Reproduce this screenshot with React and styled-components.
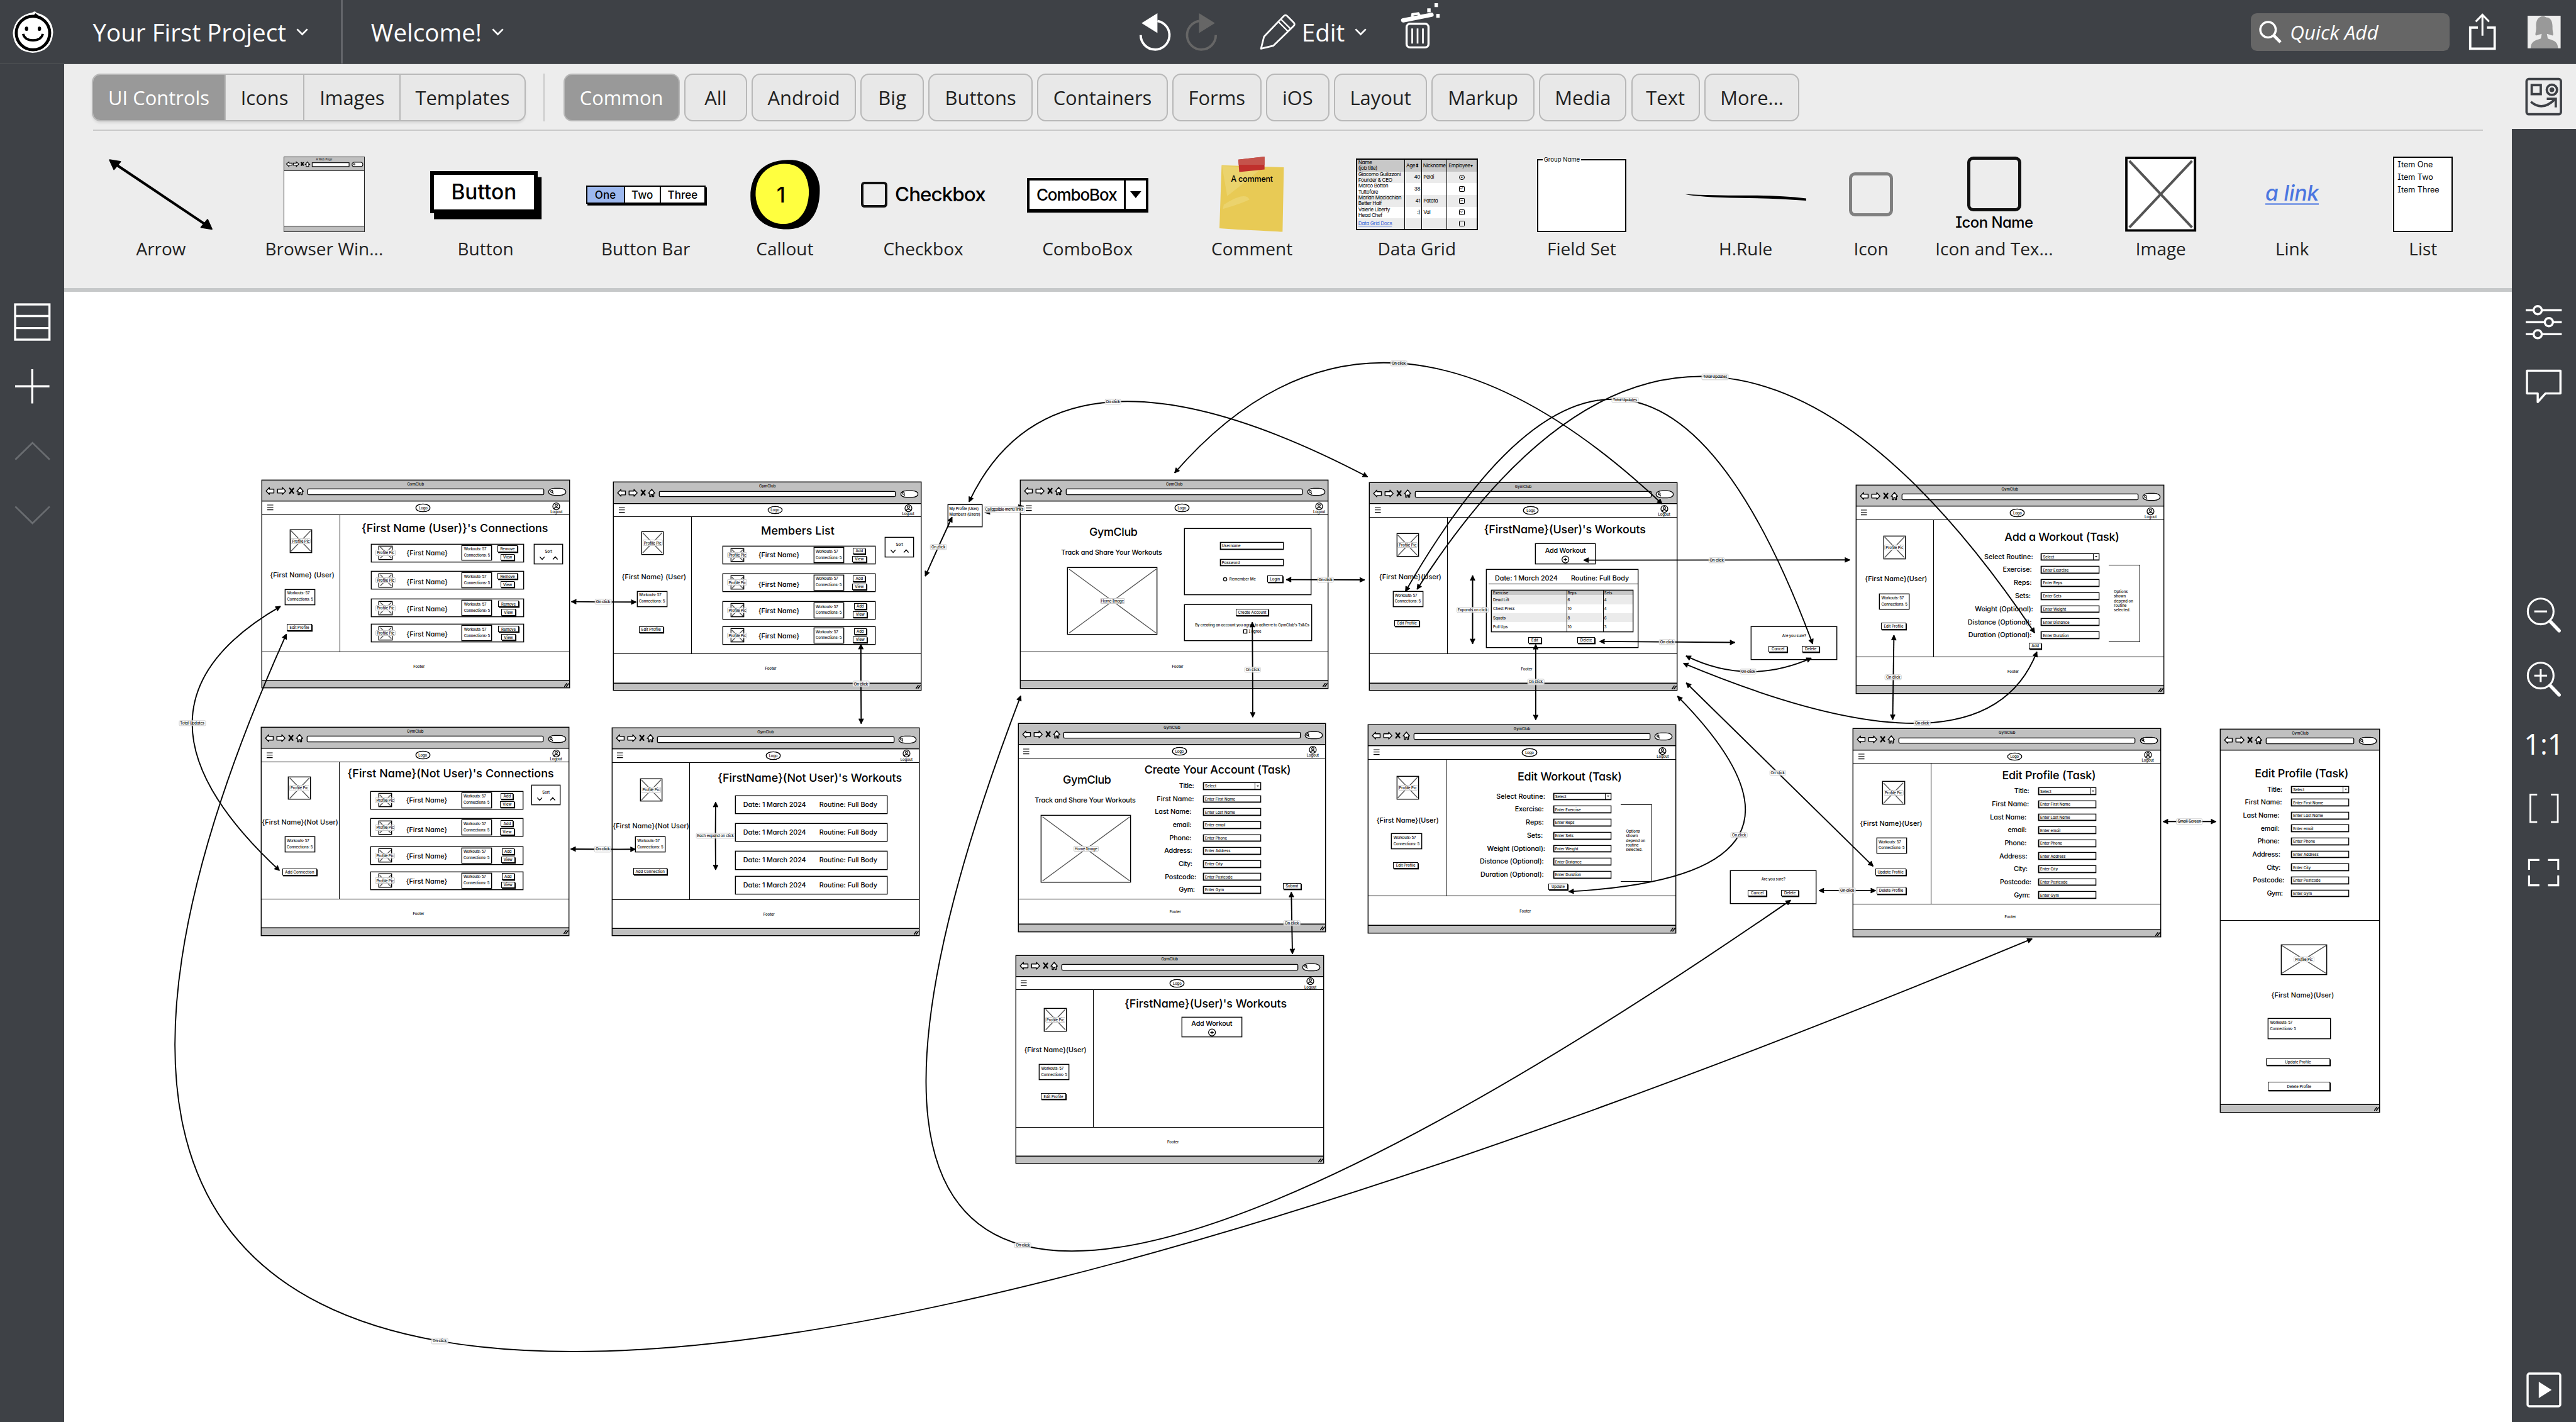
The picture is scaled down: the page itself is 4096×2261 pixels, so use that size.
import React, { useLayoutEffect, useRef } from "react";
import styled, { createGlobalStyle, css } from "styled-components";

/* Design units are drawn on a 6000 unit wide board. */
const K = 4096 / 6000;
const u = (n) => `${+(n * K).toFixed(3)}px`;

const Global = createGlobalStyle`
  * { box-sizing: border-box; }
  html, body { margin: 0; padding: 0; overflow: hidden; background: #fff; }
`;

const uiFont = `"Open Sans", "Noto Sans", sans-serif`;
const sketchFont = `Inter, Lato, "Open Sans", sans-serif`;

/* ---------- application shell ---------- */

const Shell = styled.div`
  width: 4096px;
  height: 2261px;
  display: flex;
  flex-direction: column;
  overflow: hidden;
  font-family: ${uiFont};
  color: #222;
`;

const Header = styled.header`
  flex: none;
  height: ${u(150)};
  background: #3e4146;
  color: #fff;
  display: grid;
  grid-template-columns: ${u(2654)} 1fr auto;
  border-bottom: 1px solid #55585a;
`;

const HeaderGroup = styled.div`
  display: flex;
  align-items: center;
`;

const LogoSlot = styled.div`
  width: ${u(216)};
  padding-left: ${u(28)};
  display: flex;
`;

const MenuLabel = styled.button`
  all: unset;
  display: flex;
  align-items: center;
  white-space: nowrap;
  font-size: ${u(56.5)};
  height: ${u(148)};
  gap: ${u(23)};
  width: ${(p) => u(p.$w)};
`;

const HeaderRule = styled.div`
  width: ${u(4)};
  height: 100%;
  background: #63656a;
  margin-right: ${u(66)};
`;

const Slot = styled.div`
  display: flex;
  flex: none;
  margin-left: ${(p) => u(p.$gap || 0)};
  margin-top: ${(p) => u(p.$drop || 0)};
`;

const QuickAdd = styled.div`
  width: ${u(462)};
  height: ${u(88)};
  border-radius: ${u(14)};
  background: #666;
  display: flex;
  align-items: center;
  gap: ${u(21)};
  padding-left: ${u(18)};
  font-size: ${u(46)};
  font-style: italic;
`;

const Body = styled.div`
  flex: 1;
  min-height: 0;
  display: flex;
`;

const Rail = styled.nav`
  flex: none;
  width: ${u(150)};
  background: #3e4146;
  color: #fff;
  display: flex;
  flex-direction: column;
`;

const RailButton = styled.div`
  flex: none;
  height: ${u(150)};
  display: flex;
  align-items: center;
  justify-content: center;
  font-size: ${u(66)};
  background: ${(p) => (p.$active ? "#ededed" : "transparent")};
  color: ${(p) => (p.$active ? "#3e4146" : p.$dim ? "#6a6d71" : "#fff")};
`;

const RailSpace = styled.div`
  flex: ${(p) => (p.$h ? "none" : "1")};
  height: ${(p) => (p.$h ? u(p.$h) : "auto")};
`;

const Main = styled.main`
  flex: 1;
  min-width: 0;
  display: flex;
  flex-direction: column;
`;

const Library = styled.section`
  flex: none;
  height: ${u(529)};
  background: #ededed;
  border-bottom: ${u(9)} solid #c6c8c9;
  display: flex;
  flex-direction: column;
  overflow: hidden;
`;

const FilterBar = styled.div`
  height: ${u(154)};
  margin: 0 ${u(67)};
  padding-top: ${u(21)};
  border-bottom: ${u(4)} solid #c9c9c9;
  display: flex;
  align-items: flex-start;
`;

const Segments = styled.div`
  display: flex;
  width: ${u(1010)};
  height: ${u(112)};
  margin-left: ${u(-3)};
  border: ${u(4)} solid #b8b8b8;
  border-radius: ${u(20)};
  overflow: hidden;
  background: #e8e8e8;
  box-shadow: 0 ${u(4)} ${u(5)} rgba(0, 0, 0, 0.08);
`;

const Segment = styled.div`
  width: ${(p) => u(p.$w)};
  flex: none;
  display: flex;
  align-items: center;
  justify-content: center;
  font-size: ${u(45.3)};
  color: ${(p) => (p.$on ? "#fff" : "#222")};
  background: ${(p) => (p.$on ? "#999" : "transparent")};
  & + & { border-left: ${u(4)} solid #b8b8b8; }
`;

const FilterRule = styled.div`
  width: ${u(3)};
  height: ${u(112)};
  margin: 0 ${u(44)} 0 ${u(41)};
  background: #cacaca;
`;

const Chips = styled.div`
  display: flex;
  gap: ${u(10.4)};
`;

const Chip = styled.div`
  width: ${(p) => u(p.$w)};
  height: ${u(112)};
  display: flex;
  align-items: center;
  justify-content: center;
  font-size: ${u(45.3)};
  border: ${u(4)} solid #b8b8b8;
  border-radius: ${u(20)};
  color: ${(p) => (p.$on ? "#fff" : "#222")};
  background: ${(p) => (p.$on ? "#999" : "#e8e8e8")};
`;

const Shelf = styled.div`
  display: flex;
  padding-left: ${u(45)};
`;

const ShelfItem = styled.div`
  flex: none;
  width: ${(p) => u(p.$w)};
  display: flex;
  flex-direction: column;
  align-items: center;
`;

const Thumb = styled.div`
  height: ${u(246)};
  padding-top: ${u(52)};
  display: flex;
  align-items: center;
  justify-content: center;
  font-family: ${sketchFont};
  font-feature-settings: "cv11", "cv08";
  color: #000;
`;

const ShelfLabel = styled.div`
  line-height: ${u(60)};
  font-size: ${u(41)};
  white-space: nowrap;
`;

/* ---------- library thumbnails ---------- */

const ThumbButton = styled.div`
  width: ${u(250)};
  height: ${u(98)};
  margin: 0 ${u(8)} ${u(12)} 0;
  border: ${u(9)} solid #000;
  background: #fff;
  box-shadow: ${u(9)} ${u(14)} 0 #000;
  display: flex;
  align-items: center;
  justify-content: center;
  font-size: ${u(49)};
  font-weight: 500;
`;

const ThumbBar = styled.div`
  display: flex;
  height: ${u(43)};
  border: ${u(4)} solid #000;
  box-shadow: ${u(3)} ${u(4)} 0 #000;
  background: #fff;
  font-size: ${u(25)};
  font-weight: 500;
`;

const ThumbBarCell = styled.div`
  width: ${(p) => u(p.$w)};
  background: ${(p) => (p.$on ? "#9db8ee" : "#fff")};
  display: flex;
  align-items: center;
  justify-content: center;
  & + & { border-left: ${u(4)} solid #000; }
`;

const ThumbCheck = styled.div`
  display: flex;
  align-items: center;
  gap: ${u(18)};
  font-size: ${u(46)};
  letter-spacing: -0.03em;
  font-weight: 500;
  &::before {
    content: "";
    width: ${u(49)};
    height: ${u(49)};
    border: ${u(6)} solid #111;
    border-radius: ${u(8)};
  }
`;

const ThumbCombo = styled.div`
  width: ${u(283)};
  height: ${u(78)};
  border: ${u(6)} solid #000;
  box-shadow: 0 ${u(3)} 0 #000;
  background: #fff;
  display: flex;
  font-size: ${u(38)};
  font-weight: 500;
  letter-spacing: -0.04em;
`;

const ComboText = styled.div`
  flex: 1;
  display: flex;
  align-items: center;
  justify-content: center;
`;

const ComboArrow = styled.div`
  width: ${u(51)};
  border-left: ${u(5)} solid #000;
  display: flex;
  align-items: center;
  justify-content: center;
`;

const Note = styled.div`
  width: ${u(150)};
  height: ${u(175)};
  display: grid;
  & > * { grid-area: 1 / 1; }
`;

const NoteText = styled.div`
  padding-top: ${u(41)};
  text-align: center;
  font-size: ${u(18.5)};
  font-weight: 500;
  letter-spacing: -0.02em;
  line-height: ${u(24)};
`;

const MiniGrid = styled.div`
  width: ${u(284)};
  height: ${u(167)};
  border: ${u(3)} solid #000;
  background: #fff;
  font-size: ${u(12)};
  line-height: ${u(13.4)};
  letter-spacing: -0.05em;
`;

const MiniRow = styled.div`
  display: grid;
  grid-template-columns: ${u(110)} ${u(40)} ${u(58.5)} 1fr;
  height: ${(p) => u(p.$h)};
  background: ${(p) => p.$bg};
  white-space: pre;
`;

const MiniCell = styled.div`
  padding: 0 ${u(3)};
  display: flex;
  align-items: center;
  justify-content: ${(p) => p.$j || "flex-start"};
  color: ${(p) => (p.$link ? "#4069d8" : "#000")};
  text-decoration: ${(p) => (p.$link ? "underline" : "none")};
  & + & { border-left: ${u(2)} solid #000; }
`;

const MiniCheck = styled.span`
  width: ${u(13)};
  height: ${u(13)};
  border: 1px solid #000;
  border-radius: ${(p) => (p.$round ? "50%" : u(2))};
  font-size: ${u(11)};
  line-height: ${u(10)};
  letter-spacing: 0;
  text-align: center;
`;

const ThumbFieldset = styled.fieldset`
  width: ${u(208)};
  height: ${u(175)};
  margin: 0;
  padding: 0 ${u(10)};
  border: ${u(3)} solid #000;
  background: #fff;
  legend {
    padding: 0 ${u(3)};
    font-size: ${u(14)};
    line-height: ${u(14)};
  }
`;

const ThumbIcon = styled.div`
  width: ${(p) => u(p.$s)};
  height: ${(p) => u(p.$s)};
  border: ${u(7.5)} solid ${(p) => p.$c};
  border-radius: ${u(14)};
`;

const ThumbIconText = styled.div`
  display: flex;
  flex-direction: column;
  align-items: center;
  gap: ${u(4)};
  font-size: ${u(35)};
  line-height: ${u(46)};
  font-weight: 500;
  letter-spacing: -0.02em;
`;

const ThumbLink = styled.div`
  font-size: ${u(49)};
  font-style: italic;
  font-weight: 500;
  color: #4b76e0;
  border-bottom: ${u(5)} solid #86a2e6;
  line-height: ${u(45)};
`;

const ThumbList = styled.div`
  width: ${u(139)};
  height: ${u(175)};
  border: ${u(4)} solid #000;
  background: #fff;
  padding: ${u(1)} ${u(7)};
  font-size: ${u(18.5)};
  line-height: ${u(29)};
`;

const ThumbWindow = styled.div`
  width: ${u(190)};
  height: ${u(175)};
  border: ${u(2)} solid #222;
  background: #fff;
  display: flex;
  flex-direction: column;
  justify-content: space-between;
`;

const ThumbWindowTop = styled.div`
  height: ${u(31)};
  background: #c0c0c0;
  border-bottom: ${u(2)} solid #222;
  font-size: ${u(6.5)};
  line-height: ${u(11)};
  text-align: center;
`;

const ThumbWindowBottom = styled.div`
  height: ${u(13)};
  background: #c0c0c0;
  border-top: ${u(2)} solid #222;
`;

/* ---------- wireframe canvas ---------- */

const Canvas = styled.section`
  flex: 1;
  min-height: 0;
  position: relative;
  overflow: hidden;
  background: #fff;
  font-family: ${sketchFont};
  font-feature-settings: "cv11", "cv08";
  font-weight: 500;
  font-size: ${u(8.8)};
  line-height: ${u(10.4)};
  color: #000;
`;

const Board = styled.div`
  position: absolute;
  left: ${u(-150)};
  top: ${u(-679)};
  width: ${u(6000)};
  height: ${u(3312)};
`;

const inked = css`
  border: 1px solid #000;
  box-shadow: 0 0 0 0.35px #000;
  background: #fff;
`;

const Frame = styled.article`
  position: absolute;
  left: ${(p) => u(p.$x)};
  top: ${(p) => u(p.$y)};
  width: ${(p) => u(p.$w)};
  height: ${(p) => u(p.$h)};
  display: flex;
  flex-direction: column;
  outline: 1px solid #000;
  outline-offset: -1px;
  box-shadow: 0 0 0 0.4px #000;
  background: #fff;
`;

const TitleBar = styled.div`
  flex: none;
  height: ${u(50.3)};
  background: #c0c0c0;
  border-bottom: 1px solid #000;
  box-shadow: 0 0.4px 0 #000;
`;

const TitleLine = styled.div`
  height: ${u(17)};
  padding-top: ${u(4)};
  text-align: center;
`;

const Toolbar = styled.div`
  height: ${u(22)};
  display: flex;
  align-items: center;
  padding-right: ${u(8)};
`;

const AddressBar = styled.div`
  ${inked}
  flex: 1;
  height: ${u(14.2)};
  border-radius: ${u(3)};
`;

const SearchPill = styled.div`
  ${inked}
  width: ${u(41)};
  height: ${u(17)};
  margin-left: ${(p) => u(p.$gap)};
  border-radius: 35% / 50%;
  display: flex;
  align-items: center;
  padding-left: ${u(2)};
`;

const NavStrip = styled.div`
  flex: none;
  height: ${u(31.3)};
  border-bottom: 1px solid #000;
  display: flex;
  align-items: center;
  padding-left: ${u(12.5)};
`;

const LogoOval = styled.div`
  ${inked}
  width: ${u(34)};
  height: ${u(18.6)};
  margin-left: ${u(332.8)};
  border-radius: 50%;
  display: flex;
  align-items: center;
  justify-content: center;
`;

const Logout = styled.div`
  width: ${u(28)};
  height: ${u(26)};
  margin-left: ${(p) => u(p.$gap)};
  display: flex;
  flex-direction: column;
  align-items: center;
`;

const Page = styled.div`
  flex: none;
  height: ${(p) => u(p.$h)};
  display: flex;
`;

const FooterStrip = styled.div`
  flex: 1;
  border-top: 1px solid #000;
  display: flex;
  align-items: center;
  justify-content: center;
  padding-left: ${u(15.8)};
`;

const StatusBar = styled.div`
  flex: none;
  height: ${u(18)};
  background: #c0c0c0;
  border-top: 1px solid #000;
  box-shadow: 0 -0.5px 0 #000;
  display: flex;
  align-items: center;
  justify-content: flex-end;
  padding-right: ${u(2)};
`;

/* A column whose rows begin at the given offsets. */
const Stack = styled.div`
  flex: none;
  display: grid;
  width: ${(p) => u(p.$w)};
  grid-template-rows: ${(p) =>
    p.$tops.map((t, i) => u((p.$tops[i + 1] ?? t + 20) - t)).join(" ")};
  padding-top: ${(p) => u(p.$tops[0])};
  justify-items: center;
  align-items: start;
  align-content: start;
  border-right: ${(p) => (p.$ruled ? "1px solid #000" : "0")};
  border-top: ${(p) => (p.$topped ? "1px solid #000" : "0")};
`;

const Nudge = styled.div`
  display: flex;
  justify-content: center;
  padding-left: ${(p) => u(Math.max(0, 2 * p.$dx))};
  padding-right: ${(p) => u(Math.max(0, -2 * p.$dx))};
`;

const Content = styled.div`
  flex: 1;
  min-width: 0;
  display: flex;
  flex-direction: column;
  align-items: ${(p) => (p.$center ? "center" : "stretch")};
`;

const HeadingBox = styled.div`
  flex: none;
  align-self: stretch;
  height: ${(p) => u(p.$h)};
  padding-top: ${(p) => u(Math.max(0, 2 * p.$mid - p.$h))};
  padding-bottom: ${(p) => u(Math.max(0, p.$h - 2 * p.$mid))};
  padding-left: ${(p) => u(Math.max(0, 2 * p.$dx))};
  padding-right: ${(p) => u(Math.max(0, -2 * p.$dx))};
  display: flex;
  align-items: center;
  justify-content: center;
`;

const Row = styled.div`
  display: flex;
  align-items: ${(p) => p.$align || "flex-start"};
  gap: ${(p) => u(p.$gap || 0)};
  padding-left: ${(p) => u(p.$left || 0)};
  padding-top: ${(p) => u(p.$top || 0)};
`;

const Column = styled.div`
  display: flex;
  flex-direction: column;
  align-items: ${(p) => p.$align || "flex-start"};
  gap: ${(p) => u(p.$gap || 0)};
  padding-left: ${(p) => u(p.$left || 0)};
  padding-top: ${(p) => u(p.$top || 0)};
`;

const Panel = styled.div`
  ${inked}
  flex: none;
  width: ${(p) => u(p.$w)};
  height: ${(p) => u(p.$h)};
  display: flex;
  flex-direction: column;
`;

const PictureBox = styled.div`
  ${inked}
  flex: none;
  width: ${(p) => u(p.$w)};
  height: ${(p) => u(p.$h)};
  display: grid;
  grid-template: 100% / 100%;
  place-items: center;
  & > * { grid-area: 1 / 1; }
`;

const StatsBox = styled.div`
  ${inked}
  flex: none;
  width: ${(p) => u(p.$w || 70.5)};
  height: ${(p) => u(p.$h || 36.6)};
  padding: ${u(2.6)} 0 0 ${u(3.4)};
  display: flex;
  flex-direction: column;
  align-items: flex-start;
  gap: ${u(4)};
`;

const SortBox = styled.div`
  ${inked}
  width: ${u(68)};
  height: ${u(47)};
  margin-left: ${(p) => u(p.$gap)};
  margin-top: ${(p) => u(p.$drop)};
  padding-top: ${u(11)};
  display: flex;
  flex-direction: column;
  align-items: center;
  gap: ${u(7)};
`;

const PersonRow = styled.div`
  ${inked}
  width: ${u(355.4)};
  height: ${u(42.5)};
  display: grid;
  grid-template-columns: ${u(64.6)} ${u(128.8)} ${u(87)} 1fr;
  align-items: center;
  justify-items: center;
`;

const PersonName = styled.div`
  align-self: start;
  padding-top: ${(p) => u(p.$drop)};
`;

const PersonStats = styled.div`
  justify-self: end;
`;

const WorkoutRow = styled.div`
  ${inked}
  width: ${u(355)};
  height: ${u(43)};
  display: flex;
  align-items: center;
  gap: ${u(31)};
  padding-left: ${u(18)};
`;

const WorkoutHead = styled.div`
  height: ${u(34)};
  margin-left: ${u(4)};
  padding: ${u(8)} 0 0 ${u(15)};
  display: flex;
  align-items: center;
  gap: ${u(31)};
  border-bottom: 1px solid #000;
`;

const FormRow = styled.div`
  display: grid;
  grid-template-columns: ${(p) => u(p.$label)} ${u(135)};
  align-items: center;
  height: ${(p) => u(p.$pitch)};
`;

const FormLabel = styled.div`
  display: flex;
  justify-content: flex-end;
  padding-right: ${(p) => u(p.$inset)};
`;

const Input = styled.div`
  ${inked}
  width: ${(p) => u(p.$w || 135)};
  height: ${u(17.2)};
  box-shadow: inset 0 -0.5px 0 #000, inset 0.5px 0 0 #000, 0 0 0 0.3px #000;
  display: flex;
  align-items: center;
  justify-content: space-between;
  padding-left: ${u(3)};
  white-space: nowrap;
`;

const SelectCaret = styled.span`
  width: ${u(13)};
  align-self: stretch;
  border-left: 1px solid #000;
  display: flex;
  align-items: center;
  justify-content: center;
  &::after {
    content: "";
    border: ${u(3)} solid transparent;
    border-top: ${u(4)} solid #000;
    border-bottom: 0;
  }
`;

const PushButton = styled.div`
  ${inked}
  flex: none;
  width: ${(p) => u(p.$w)};
  height: ${(p) => u(p.$h)};
  box-shadow: ${u(1.6)} ${u(2)} 0 #000;
  display: flex;
  align-items: center;
  justify-content: center;
  white-space: nowrap;
`;

const FormAction = styled.div`
  display: flex;
  align-self: ${(p) => (p.$low ? "flex-end" : "flex-start")};
  padding-left: ${(p) => u(p.$left)};
  padding-top: ${(p) => u(p.$top || 0)};
  padding-bottom: ${(p) => u(p.$bottom || 0)};
`;

const Bracket = styled.div`
  width: ${u(73)};
  height: ${u(181)};
  margin: ${u(33)} 0 0 ${u(22.7)};
  padding: ${u(56)} 0 0 ${u(12)};
  border: 1px solid #000;
  border-left: 0;
  line-height: ${u(10.8)};
`;

const Words = styled.div`
  flex: none;
  font-size: ${(p) => u(p.$size || 8.8)};
  line-height: ${(p) => u(p.$size ? p.$size * 1.25 : 10.4)};
  white-space: pre;
`;

const tagLook = css`
  height: ${u(13.6)};
  display: flex;
  align-items: center;
  justify-content: center;
  border: 1px solid #ccc;
  border-radius: ${u(3)};
  background: rgba(255, 255, 255, 0.78);
  white-space: nowrap;
`;

const PictureTag = styled.div`
  ${tagLook}
  width: ${(p) => u(p.$w)};
`;

const LinkTag = styled.div`
  ${tagLook}
  position: absolute;
  left: ${(p) => u(p.$x)};
  top: ${(p) => u(p.$y)};
  width: ${(p) => u(p.$w)};
  transform: translate(-50%, -50%);
`;

const GridTable = styled.div`
  ${inked}
  width: ${u(332)};
  height: ${u(98)};
  margin: ${u(13)} 0 0 ${u(9.5)};
`;

const GridRow = styled.div`
  display: grid;
  grid-template-columns: ${u(174.5)} ${u(85.5)} 1fr;
  height: ${(p) => u(p.$h)};
  background: ${(p) => p.$bg};
`;

const GridCell = styled.div`
  display: flex;
  align-items: center;
  padding-left: ${u(3.5)};
  & + & { border-left: ${u(2)} solid #000; padding-left: ${u(1)}; }
`;

const RadioDot = styled.div`
  ${inked}
  width: ${u(9)};
  height: ${u(9)};
  border-radius: 50%;
`;

const TickBox = styled.div`
  ${inked}
  width: ${u(9.6)};
  height: ${u(9.6)};
`;

const LinkLayer = styled.svg`
  position: absolute;
  inset: 0;
  width: 100%;
  height: 100%;
  overflow: visible;
  fill: none;
  stroke: #000;
`;

const Icon = styled.svg`
  display: block;
  flex: none;
  width: ${(p) => u(p.$w)};
  height: ${(p) => u(p.$h)};
  overflow: visible;
  fill: none;
  stroke: currentColor;
  stroke-width: ${(p) => p.$sw || 5};
`;

/* Tracks its letters so that the text takes up the width stored for it. */
function Text({ w, size, children }) {
  const ref = useRef(null);
  useLayoutEffect(() => {
    const el = ref.current;
    el.style.letterSpacing = "0px";
    const natural = el.getBoundingClientRect().width;
    el.style.letterSpacing = `${(w * K - natural) / el.textContent.length}px`;
  }, [w, children]);
  return <Words ref={ref} $size={size}>{children}</Words>;
}

const Svg = ({ w, h, sw, y = 0, children }) => (
  <Icon $w={w} $h={h} $sw={sw} viewBox={`0 ${y} ${w} ${h}`}>{children}</Icon>
);

const Chevron = () => (
  <Svg w={28} h={16} sw={4}><path d="M2 2 L14 14 L26 2" /></Svg>
);

function Picture({ w = 52, h = 54, label = "Profile Pic", textW = 41 }) {
  return (
    <PictureBox $w={w} $h={h}>
      <Svg w={w - 4} h={h - 4} sw={2}>
        <path d={`M1 1 L${w - 5} ${h - 5} M${w - 5} 1 L1 ${h - 5}`} stroke="#555" />
      </Svg>
      <PictureTag $w={textW + 6}><Text w={textW}>{label}</Text></PictureTag>
    </PictureBox>
  );
}

const Stats = ({ w, h }) => (
  <StatsBox $w={w} $h={h}>
    <Text w={52}>Workouts: 57</Text>
    <Text w={60.5}>Connections: 5</Text>
  </StatsBox>
);

const Button = ({ w, h = 15.4, children }) => (
  <PushButton $w={w} $h={h}>{children}</PushButton>
);

const Heading = ({ h, mid, dx = 0, w, children }) => (
  <HeadingBox $h={h} $mid={mid} $dx={dx}><Text w={w} size={26.3}>{children}</Text></HeadingBox>
);

const NAME = 15.8;

function Browser({ x, y, w = 717.3, h = 485.6, mobile, foot = 400, logoutGap = 279.4, children }) {
  return (
    <Frame $x={x} $y={y} $w={w} $h={h}>
      <TitleBar>
        <TitleLine>GymClub</TitleLine>
        <Toolbar>
          <Svg w={106.6} h={22} y={17} sw={2.1}>
            <g fill="#fff" strokeLinejoin="round">
              <path d="M10.5 25.5 L18 17.5 V21 H28.5 V30 H18 V33 Z" />
              <path d="M56 25.5 L48.5 17.5 V21 H37 V30 H48.5 V33 Z" />
              <path d="M89.8 17 L97.2 26 H94.5 V34 H91.5 V29 H88 V34 H85 V26 H82.2 Z" />
            </g>
            <path d="M65.5 19 L74 30 M74 19.5 L65.5 30.5" strokeWidth="3.4" strokeLinecap="round" />
          </Svg>
          <AddressBar />
          <SearchPill $gap={mobile ? 12 : 10.5}>
            <Svg w={8} h={10} sw={1.7}><circle cx="3.4" cy="3.4" r="2.4" /><path d="M5 5.4 L7 9" /></Svg>
          </SearchPill>
        </Toolbar>
      </TitleBar>
      {mobile ? children : (
        <>
          <NavStrip>
            <Svg w={14} h={12} sw={1.8}><path d="M0 0 H14 M0 5.5 H14 M0 11.2 H14" /></Svg>
            <LogoOval><Text w={20}>Logo</Text></LogoOval>
            <Logout $gap={logoutGap}>
              <Svg w={16} h={16.4} sw={1.8}>
                <circle cx="8" cy="9" r="8" />
                <circle cx="8" cy="6.6" r="2.7" />
                <path d="M3 14.8 Q3.5 11.2 8 11.2 Q12.5 11.2 13 14.8" />
              </Svg>
              <Text w={28}>Logout</Text>
            </Logout>
          </NavStrip>
          <Page $h={foot - 81.6}>{children}</Page>
          <FooterStrip><Text w={26.5}>Footer</Text></FooterStrip>
        </>
      )}
      <StatusBar>
        <Svg w={11} h={8} sw={2.2}><path d="M1 8 L6 1 M5.5 8 L10.5 1.5" strokeLinecap="round" /></Svg>
      </StatusBar>
    </Frame>
  );
}

/* tops: where picture, name, stats and button start below the nav strip */
function Side({ tops, picDx = 1, nameDx = 3, nameW = 145, label = "{First Name}(User)", children }) {
  return (
    <Stack $w={182.4} $ruled $tops={tops}>
      <Nudge $dx={picDx}><Picture /></Nudge>
      <Nudge $dx={nameDx}><Text w={nameW} size={NAME}>{label}</Text></Nudge>
      <Nudge $dx={-0.6}><Stats /></Nudge>
      {children}
    </Stack>
  );
}

const EditProfile = () => <Nudge $dx={-2.5}><Button w={58}>Edit Profile</Button></Nudge>;
const AddConnection = () => <Nudge $dx={-1}><Button w={79.4}>Add Connection</Button></Nudge>;

function Sort({ gap, drop }) {
  return (
    <SortBox $gap={gap} $drop={drop}>
      <Text w={17}>Sort</Text>
      <Svg w={42} h={7} sw={2}><path d="M0.5 0.5 L6 6.5 L11.5 0.5 M31 6.5 L36.5 0.5 L42 6.5" /></Svg>
    </SortBox>
  );
}

const personDrops = [10.5, 15, 12.6, 12];

function People({ action, sortGap, sortDrop }) {
  const remove = action === "Remove";
  return (
    <Row $left={72.6}>
      <Stack $w={355.4} $tops={[0, 64, 128.8, 187.3]}>
        {personDrops.map((drop, i) => (
          <PersonRow key={drop}>
            <Picture w={32} h={32} />
            <PersonName $drop={drop}><Text w={96} size={NAME}>{"{First Name}"}</Text></PersonName>
            <PersonStats><Stats /></PersonStats>
            <Column $gap={4.4} $align="center" $left={i > 1 ? 4 : 0}>
              <Button w={remove ? 48 : 29.5} h={14.8}>{action}</Button>
              <Button w={33} h={14.8}>View</Button>
            </Column>
          </PersonRow>
        ))}
      </Stack>
      <Sort gap={sortGap} drop={sortDrop} />
    </Row>
  );
}

/* label, distance to its field, label width, hint */
const profileFields = [
  ["Title:", 21.3, 34.7, "Select"],
  ["First Name:", 21.3, 86.7, "Enter First Name"],
  ["Last Name:", 27.3, 85, "Enter Last Name"],
  ["email:", 27.3, 43.5, "Enter email"],
  ["Phone:", 27.3, 51, "Enter Phone"],
  ["Address:", 25.5, 65, "Enter Address"],
  ["City:", 25.5, 31.5, "Enter City"],
  ["Postcode:", 16.1, 73, "Enter Postcode"],
  ["Gym:", 19.7, 37, "Enter Gym"],
];

const workoutFields = [
  ["Select Routine:", 18.5, 114, "Select"],
  ["Exercise:", 21.7, 67.5, "Enter Exercise"],
  ["Reps:", 21.7, 42, "Enter Reps"],
  ["Sets:", 24.3, 36.5, "Enter Sets"],
  ["Weight (Optional):", 18.5, 135.5, "Enter Weight"],
  ["Distance (Optional):", 21.7, 149, "Enter Distance"],
  ["Duration (Optional):", 21.7, 147.5, "Enter Duration"],
];

function Form({ rows, labelW, pitch = 30.25 }) {
  return (
    <div>
      {rows.map(([label, inset, w, hint]) => (
        <FormRow key={label} $label={labelW} $pitch={pitch}>
          <FormLabel $inset={inset}><Text w={w} size={NAME}>{label}</Text></FormLabel>
          <Input>{hint}{hint === "Select" && <SelectCaret />}</Input>
        </FormRow>
      ))}
    </div>
  );
}

function WorkoutForm({ title, titleW, dx, mid, left, top, action, actionW }) {
  return (
    <Content>
      <Heading h={70.8} mid={mid} dx={dx} w={titleW}>{title}</Heading>
      <Row>
        <Column>
          <Form rows={workoutFields} labelW={249} pitch={30.43} />
          <FormAction $left={left} $top={top}><Button w={actionW}>{action}</Button></FormAction>
        </Column>
        <Bracket>Options<br />shown<br />depend on<br />routine<br />selected.</Bracket>
      </Row>
    </Content>
  );
}

const AddWorkoutBox = () => (
  <Nudge $dx={7}>
    <Panel $w={140.5} $h={47.5}>
      <Column $align="center" $top={5.6} $gap={0}>
        <Text w={95} size={NAME}>Add Workout</Text>
        <Svg w={18} h={18} sw={1.8}><circle cx="9" cy="9.7" r="8" /><path d="M5 9.7 H13 M9 5.7 V13.7" /></Svg>
      </Column>
    </Panel>
  </Nudge>
);

const Welcome = ({ w, left, top }) => (
  <Stack $w={w} $tops={[top, top + 54, top + 98.5]}>
    <Nudge $dx={left + 2}><Text w={112} size={26.3}>GymClub</Text></Nudge>
    <Nudge $dx={left - 2}><Text w={235} size={NAME}>Track and Share Your Workouts</Text></Nudge>
    <Nudge $dx={left}><Picture w={209.4} h={155.6} label="Home Image" textW={53} /></Nudge>
  </Stack>
);

const DateAndRoutine = () => (
  <>
    <Text w={146} size={NAME}>Date: 1 March 2024</Text>
    <Text w={135} size={NAME}>Routine: Full Body</Text>
  </>
);

const Confirm = ({ x, y }) => (
  <Frame $x={x} $y={y} $w={201} $h={78}>
    <Column $align="center" $top={16} $gap={19}>
      <Text w={55.7}>Are you sure?</Text>
      <Row $gap={34}><Button w={43.4}>Cancel</Button><Button w={41}>Delete</Button></Row>
    </Column>
  </Frame>
);

const exercises = [["Dead Lift", "6", "4"], ["Chest Press", "10", "4"], ["Squats", "8", "6"], ["Pull Ups", "10", "3"]];

/* from, to, label point, label, label width */
const links = [
  [1330.8, 1401.3, 1481.6, 1402.3, 1404.7, 1402, "On click", 39],
  [1329.4, 1977.5, 1479.8, 1978, 1404, 1978, "On click", 39],
  [2005.2, 1500.7, 2005.9, 1685.5, 2005.3, 1592.9, "On click", 39],
  [2155.1, 1341.9, 2217.6, 1204.5, 2185.7, 1273.7, "On click", 39],
  [2294, 1194, 2384, 1179, 2339, 1186.9, "Collapsible menu links", 96],
  [2257.1, 1168.9, 3185.5, 1110.7, 2592.3, 936, "On click", 39],
  [2735.9, 1101.5, 3871.4, 1173.7, 3257.8, 846, "On click", 39],
  [3273.5, 1377.6, 4222.1, 1499.9, 3785, 931.6, "Total Updates", 63],
  [3300.5, 1372.7, 4739.1, 1473.9, 3994.9, 878, "Total Updates", 63],
  [2995.9, 1350, 3178.6, 1350.7, 3087.2, 1350.3, "On click", 39],
  [2916.8, 1449.2, 2917.9, 1670.3, 2917.6, 1559.4, "On click", 39],
  [3007.7, 2078, 3010.3, 2221.4, 3009, 2149.7, "On click", 39],
  [3430, 1340.4, 3430, 1499.5, 3430, 1420.3, "Expands on click", 76],
  [1666.9, 1868.2, 1666.9, 2026, 1666.4, 1946.8, "Each expand on click", 92],
  [3577, 1500.9, 3577, 1676.5, 3577, 1588.3, "On click", 39],
  [3726, 1494, 4041, 1496.4, 3883, 1494.9, "On click", 39],
  [3688.8, 1304.6, 4308.6, 1304.1, 3998.4, 1304.6, "On click", 39],
  [3927, 1527.7, 4219, 1532.8, 4071.7, 1564.4, "On click", 39],
  [3921, 1545, 4744.3, 1518, 4476.6, 1684.3, "On click", 39],
  [3927.5, 1590.4, 4362.9, 2017.6, 4140.7, 1800, "On click", 39],
  [3907.1, 1621.4, 3654, 2076.6, 4050.5, 1944.6, "On click", 39],
  [4411.3, 1479.5, 4408.4, 1676, 4409.8, 1577, "On click", 39],
  [4236.8, 2074.4, 4368.8, 2074.4, 4302.5, 2074, "On click", 39],
  [5038.3, 1913.5, 5161.4, 1913.5, 5099.5, 1913.5, "Small Screen", 61],
  [2377.5, 1620.7, 4170.8, 2096.8, 2382.3, 2900.4, "On click", 39],
  [653.3, 1412.3, 650.9, 2027.5, 447.7, 1684.6, "Total Updates", 63],
  [667, 1477, 4733.3, 2186.6, 1024, 3123.6, "On click", 39],
];

function curve([x1, y1, x2, y2, mx, my]) {
  return `M${x1} ${y1} Q${2 * mx - (x1 + x2) / 2} ${2 * my - (y1 + y2) / 2} ${x2} ${y2}`;
}

function Links() {
  return (
    <>
      <LinkLayer viewBox="0 0 6000 3312">
        <defs>
          <marker id="head" markerUnits="userSpaceOnUse" markerWidth="16" markerHeight="16" viewBox="0 0 14 14" refX="12.5" refY="7" orient="auto-start-reverse">
            <path d="M12 7 L3 2.6 Q4.2 7 3 11.4 Z" fill="#000" stroke="#000" strokeWidth="1.8" strokeLinejoin="round" />
          </marker>
        </defs>
        {links.map((l) => (
          <path key={l.join()} d={curve(l)} strokeWidth="2.8" markerStart="url(#head)" markerEnd="url(#head)" />
        ))}
      </LinkLayer>
      {links.map((l) => (
        <LinkTag key={l.join()} $x={l[4]} $y={l[5]} $w={l[7]}><Text w={l[7] - 6.5}>{l[6]}</Text></LinkTag>
      ))}
    </>
  );
}

function Wireframes() {
  return (
    <Canvas>
      <Board>
        <Browser x={609.4} y={1117.6}>
          <Side tops={[34.4, 131, 172.9, 254.4]} nameDx={4} nameW={150} label="{First Name} (User)"><EditProfile /></Side>
          <Content>
            <Heading h={67.2} mid={31} w={434.7}>{"{First Name (User)}'s Connections"}</Heading>
            <People action="Remove" sortGap={24} sortDrop={0} />
          </Content>
        </Browser>
        <Browser x={1428.7} y={1122.6}>
          <Side tops={[33.2, 131, 172.4, 254.4]} nameDx={4} nameW={150} label="{First Name} (User)"><EditProfile /></Side>
          <Content>
            <Heading h={67.2} mid={32.4} dx={-20.4} w={171}>Members List</Heading>
            <People action="Add" sortGap={22} sortDrop={-20.5} />
          </Content>
        </Browser>
        <Frame $x={2206.8} $y={1174.2} $w={81.6} $h={53.6}>
          <Column $left={4.5} $top={4.4} $gap={3.7}>
            <Text w={68}>My Profile (User)</Text>
            <Text w={72}>Members (Users)</Text>
          </Column>
        </Frame>
        <Browser x={2376.5} y={1117.9} logoutGap={289} foot={399}>
          <Welcome w={381.6} left={23.9} top={24} />
          <Column $top={31.4} $gap={21.3}>
            <Panel $w={296} $h={155}>
              <Column $left={82} $top={30.4} $gap={21.8}>
                <Input $w={148.4}>Username</Input>
                <Input $w={148.4}>Password</Input>
                <Row $left={7.5} $gap={5.5} $align="center">
                  <RadioDot />
                  <Text w={61.5}>Remember Me</Text>
                  <Row $left={21}><Button w={36.4} h={16.2}>Login</Button></Row>
                </Row>
              </Column>
            </Panel>
            <Panel $w={297.5} $h={86}>
              <Column $align="center" $left={19.4} $top={10} $gap={15.6}>
                <Button w={77}>Create Account</Button>
                <Column $align="center" $gap={5.6}>
                  <Text w={266}>{"By creating an account you agree to adherre to GymClub's Ts&Cs"}</Text>
                  <Row $gap={3.6} $align="center"><TickBox /><Text w={29}>I agree</Text></Row>
                </Column>
              </Column>
            </Panel>
          </Column>
        </Browser>
        <Browser x={2371} y={1684.8} foot={407.8}>
          <Welcome w={294} left={11.7} top={34.2} />
          <Content>
            <Heading h={49.3} mid={27.2} dx={-40.6} w={341}>Create Your Account (Task)</Heading>
            <Row>
              <Form rows={profileFields} labelW={137.3} />
              <FormAction $low $left={50.7} $bottom={16.4}><Button w={42.5}>Submit</Button></FormAction>
            </Row>
          </Content>
        </Browser>
        <Browser x={3189.3} y={1123.4} foot={399}>
          <Side tops={[37.6, 130, 171.9, 238.7]} picDx={-1} nameDx={5}><EditProfile /></Side>
          <Content $center>
            <Heading h={61} mid={28.2} dx={5.6} w={377}>{"{FirstName}(User)'s Workouts"}</Heading>
            <AddWorkoutBox />
            <Row $top={12.4}>
              <Panel $w={355} $h={183}>
                <WorkoutHead><DateAndRoutine /></WorkoutHead>
                <GridTable>
                  <GridRow $h={10.5} $bg="#c8c8c8"><GridCell>Exercise</GridCell><GridCell>Reps</GridCell><GridCell>Sets</GridCell></GridRow>
                  {exercises.map((cells, i) => (
                    <GridRow key={cells[0]} $h={21} $bg={i % 2 ? "#fff" : "#ebebeb"}>
                      {cells.map((c, j) => <GridCell key={j}>{c}</GridCell>)}
                    </GridRow>
                  ))}
                </GridTable>
                <Row $left={97} $top={11} $gap={84.4}><Button w={29.6}>Edit</Button><Button w={40.6}>Delete</Button></Row>
              </Panel>
            </Row>
          </Content>
        </Browser>
        <Browser x={3186.2} y={1687.5} foot={399}>
          <Side tops={[38.2, 132, 171.9, 238.7]} picDx={2.5} nameDx={2}><EditProfile /></Side>
          <WorkoutForm title="Edit Workout (Task)" titleW={243} dx={20} mid={40.4} left={238.2} top={4.6} action="Update" actionW={44.6} />
        </Browser>
        <Browser x={4322.6} y={1129.5}>
          <Side tops={[37, 127.7, 172.4, 239.7]} picDx={-0.5} nameDx={3.2}><EditProfile /></Side>
          <WorkoutForm title="Add a Workout (Task)" titleW={267} dx={30} mid={40.6} left={221.2} top={1.6} action="Add" actionW={28.6} />
        </Browser>
        <Confirm x={4078.3} y={1458.5} />
        <Confirm x={4030} y={2026.7} />
        <Browser x={4316} y={1697} foot={407.6}>
          <Side tops={[41.2, 130.4, 172.4, 244, 286.2]} picDx={4} nameDx={-1.5}>
            <Nudge $dx={-3}><Button w={71.6} h={16}>Update Profile</Button></Nudge>
            <Nudge $dx={-1.5}><Button w={69} h={18}>Delete Profile</Button></Nudge>
          </Side>
          <Content>
            <Heading h={49.3} mid={28.4} dx={6.6} w={218.5}>Edit Profile (Task)</Heading>
            <Form rows={profileFields} labelW={249} />
          </Content>
        </Browser>
        <Browser x={608.4} y={1693.6}>
          <Side tops={[33.2, 131, 173, 247.9]} picDx={-1.5} nameDx={0} nameW={178} label="{First Name}(Not User)"><AddConnection /></Side>
          <Content>
            <Heading h={67.2} mid={27.2} dx={-8.6} w={481}>{"{First Name}(Not User)'s Connections"}</Heading>
            <People action="Add" sortGap={19} sortDrop={-14.8} />
          </Content>
        </Browser>
        <Browser x={1424.7} y={1694.6}>
          <Side tops={[36.6, 138.5, 172.4, 246]} picDx={1.5} nameDx={1} nameW={178} label="{First Name}(Not User)"><AddConnection /></Side>
          <Content>
            <Heading h={77} mid={36.8} dx={11.5} w={429}>{"{FirstName}(Not User)'s Workouts"}</Heading>
            <Row $left={104.7}>
              <Stack $w={355} $tops={[0, 64.3, 129.3, 187.5]}>
                <WorkoutRow><DateAndRoutine /></WorkoutRow>
                <WorkoutRow><DateAndRoutine /></WorkoutRow>
                <WorkoutRow><DateAndRoutine /></WorkoutRow>
                <WorkoutRow><DateAndRoutine /></WorkoutRow>
              </Stack>
            </Row>
          </Content>
        </Browser>
        <Browser x={2365.6} y={2224.7}>
          <Side tops={[41.9, 130.4, 172.4, 239.4]} picDx={2} nameDx={2}><EditProfile /></Side>
          <Content $center>
            <Heading h={61.9} mid={32.2} dx={-7.4} w={378}>{"{FirstName}(User)'s Workouts"}</Heading>
            <AddWorkoutBox />
          </Content>
        </Browser>
        <Browser x={5171.6} y={1698} w={371.8} h={893} mobile>
          <Content>
            <Heading h={75.6} mid={53.6} dx={3.5} w={218.5}>Edit Profile (Task)</Heading>
            <Form rows={profileFields} labelW={165} />
          </Content>
          <Page $h={429.4}>
            <Stack $w={371.8} $topped $tops={[55, 163, 226.5, 320, 375]}>
              <Nudge $dx={9}><Picture w={107.8} h={70} /></Nudge>
              <Nudge $dx={6}><Text w={146} size={NAME}>{"{First Name}(User)"}</Text></Nudge>
              <Nudge $dx={-2}><Stats w={146} h={48} /></Nudge>
              <Nudge $dx={-5}><Button w={149.5} h={16.5}>Update Profile</Button></Nudge>
              <Nudge $dx={-2.5}><Button w={144.5} h={20}>Delete Profile</Button></Nudge>
            </Stack>
          </Page>
        </Browser>
        <Links />
      </Board>
    </Canvas>
  );
}

/* ---------- header, rails, library ---------- */

function TopBar() {
  return (
    <Header>
      <HeaderGroup>
        <LogoSlot>
          <Svg w={98} h={100}>
            <path d="M48 4 Q53 -1 58 5 Q94 14 96 50 Q93 96 48 98 Q5 96 2 52 Q6 12 48 4Z" fill="#fff" stroke="none" />
            <circle cx="49" cy="52" r="39" stroke="#000" strokeWidth="7" />
            <path d="M53 8 L64 17" stroke="#000" strokeWidth="6" />
            <ellipse cx="34" cy="42" rx="4" ry="5" fill="#000" stroke="none" />
            <ellipse cx="64" cy="42" rx="4" ry="5" fill="#000" stroke="none" />
            <path d="M26 54 Q30 69 49 69 Q68 69 72 54" stroke="#000" strokeWidth="5.5" />
          </Svg>
        </LogoSlot>
        <MenuLabel $w={578}>Your First Project<Chevron /></MenuLabel>
        <HeaderRule />
        <MenuLabel $w={400}>Welcome!<Chevron /></MenuLabel>
      </HeaderGroup>
      <HeaderGroup>
        <Slot $gap={-4}>
          <Svg w={80} h={92} sw={5.5}>
            <path d="M7 54 A33.5 33.5 0 1 0 46 21" />
            <path d="M9 26 L46 3 V49 Z" fill="currentColor" stroke="none" />
          </Svg>
        </Slot>
        <Slot $gap={27}>
          <Svg w={80} h={92} sw={5.5}>
            <g stroke="#666">
              <path d="M75 54 A33.5 33.5 0 1 1 36 21" />
              <path d="M73 26 L36 3 V49 Z" fill="#666" stroke="none" />
            </g>
          </Svg>
        </Slot>
        <Slot $gap={94}>
          <Svg w={90} h={90} sw={4}>
            <path d="M6 84 L13 56 L59 8 Q63 4 67 8 L82 23 Q86 27 82 31 L35 77 Z" strokeLinejoin="round" />
            <path d="M46 21 L69 44 M52 15 L75 38" strokeWidth="3.4" />
          </Svg>
        </Slot>
        <Slot $gap={11}><MenuLabel $w={161}>Edit<Chevron /></MenuLabel></Slot>
        <Slot $gap={66} $drop={-30}>
          <Svg w={100} h={110} sw={5}>
            <rect x="17" y="51" width="51" height="55" rx="8" />
            <path d="M30 62 V97 M42.5 62 V97 M55 62 V97" strokeWidth="4" />
            <path d="M9 43 L75 30" strokeWidth="10" strokeLinecap="round" />
            <path d="M30 35 L31 29 L44 27 L47 32" strokeWidth="6" />
            <path d="M82 3 h8 v9 h-8z M65 15 h8 v9 h-8z M86 28 h8 v9 h-8z" fill="currentColor" stroke="none" />
          </Svg>
        </Slot>
      </HeaderGroup>
      <HeaderGroup>
        <QuickAdd>
          <Svg w={52} h={52} sw={5}>
            <circle cx="21" cy="21" r="18" />
            <path d="M34 34 L50 50" strokeWidth="7" />
          </Svg>
          Quick Add
        </QuickAdd>
        <Slot $gap={41}>
          <Svg w={72} h={90} sw={5.5}>
            <path d="M25 35 H7 V84 H64 V35 H46" />
            <path d="M35.5 54 V6 M20 21 L35.5 5 L51 21" strokeWidth="4.5" />
          </Svg>
        </Slot>
        <Slot $gap={69}>
          <Svg w={77} h={76}>
            <rect width="77" height="76" fill="#ededed" stroke="none" />
            <path d="M38 1 C20 1 19 18 20 28 C20 40 16 44 20 46 L33 42 L31 53 C16 58 8 60 7 76 H71 C70 60 62 58 47 53 L45 42 L58 46 C62 44 58 40 58 28 C59 12 52 3 44 4 Z" fill="#999" stroke="none" />
          </Svg>
        </Slot>
        <Slot $gap={36} />
      </HeaderGroup>
    </Header>
  );
}

function LeftRail() {
  return (
    <Rail>
      <RailSpace $h={525} />
      <RailButton>
        <Svg w={86} h={88} sw={5}><rect x="3" y="3" width="80" height="82" /><path d="M3 30 H83 M3 58 H83" /></Svg>
      </RailButton>
      <RailButton><Svg w={80} h={80} sw={5}><path d="M40 0 V80 M0 40 H80" /></Svg></RailButton>
      <RailButton $dim><Svg w={84} h={44} sw={4}><path d="M2 42 L42 3 L82 42" /></Svg></RailButton>
      <RailButton $dim><Svg w={84} h={44} sw={4}><path d="M2 2 L42 41 L82 2" /></Svg></RailButton>
    </Rail>
  );
}

function RightRail() {
  return (
    <Rail>
      <RailButton $active>
        <Svg w={90} h={90} sw={5.5}>
          <rect x="5" y="4" width="80" height="82" rx="5" />
          <rect x="17" y="18" width="21" height="21" strokeWidth="5.5" />
          <circle cx="64" cy="29" r="12" />
          <circle cx="64" cy="29" r="5.5" fill="currentColor" stroke="none" />
          <path d="M15 57 Q42 80 71 51 M52 50 H73 V70" />
        </Svg>
      </RailButton>
      <RailSpace $h={375} />
      <RailButton>
        <Svg w={84} h={80} sw={5}>
          <path d="M0 12 H18 M38 12 H84 M0 40 H44 M64 40 H84 M0 68 H18 M38 68 H84" />
          <circle cx="28" cy="12" r="9.5" /><circle cx="54" cy="40" r="9.5" /><circle cx="28" cy="68" r="9.5" />
        </Svg>
      </RailButton>
      <RailButton>
        <Svg w={84} h={84} sw={5}><path d="M3 5 H81 V58 H46 L28 78 V58 H3 Z" strokeLinejoin="round" /></Svg>
      </RailButton>
      <RailSpace $h={383} />
      <RailButton>
        <Svg w={78} h={80} sw={4.5}>
          <circle cx="32" cy="31" r="30" /><path d="M17 31 H47" /><path d="M54 54 L75 76" strokeWidth="8" strokeLinecap="round" />
        </Svg>
      </RailButton>
      <RailButton>
        <Svg w={78} h={80} sw={4.5}>
          <circle cx="32" cy="31" r="30" /><path d="M17 31 H47 M32 16 V46" /><path d="M54 54 L75 76" strokeWidth="8" strokeLinecap="round" />
        </Svg>
      </RailButton>
      <RailButton>1:1</RailButton>
      <RailButton><Svg w={68} h={68} sw={4}><path d="M18 2 H2 V66 H18 M50 2 H66 V66 H50" /></Svg></RailButton>
      <RailButton>
        <Svg w={72} h={64} sw={4.5}><path d="M26 2 H2 V25 M46 2 H70 V25 M2 38 V61 H26 M70 38 V61 H46" /></Svg>
      </RailButton>
      <RailSpace />
      <RailButton>
        <Svg w={82} h={82} sw={5}><rect x="3" y="3" width="76" height="76" rx="4" /><path d="M29 22 L59 41 L29 60 Z" fill="currentColor" stroke="none" /></Svg>
      </RailButton>
    </Rail>
  );
}

const people = [
  ["Giacomo Guilizzoni\nFounder & CEO", "40", "Peldi", "radio"],
  ["Marco Botton\nTuttofare", "38", "", "✓"],
  ["Mariah Maclachlan\nBetter Half", "41", "Patata", "–"],
  ["Valerie Liberty\nHead Chef", ":)", "Val", "✓"],
  ["Data Grid Docs", "", "", ""],
];

function DataGridThumb() {
  return (
    <MiniGrid>
      <MiniRow $h={27} $bg="#c8c8c8">
        <MiniCell>{"Name\n(job title)"}</MiniCell><MiniCell>Age⬍</MiniCell><MiniCell $j="center">Nickname</MiniCell><MiniCell>Employee▾</MiniCell>
      </MiniRow>
      {people.map(([name, age, nick, mark], i) => (
        <MiniRow key={name} $h={i === 4 ? 25 : 27.3} $bg={i % 2 ? "#fff" : "#ebebeb"}>
          <MiniCell $link={i === 4}>{name}</MiniCell>
          <MiniCell $j="flex-end">{age}</MiniCell>
          <MiniCell>{nick}</MiniCell>
          <MiniCell $j="center"><MiniCheck $round={mark === "radio"}>{mark === "radio" ? "•" : mark}</MiniCheck></MiniCell>
        </MiniRow>
      ))}
    </MiniGrid>
  );
}

const shelf = [
  ["Arrow", 360, (
    <Svg w={242} h={165} sw={6}>
      <path d="M10 8 L232 157" />
      <path d="M2 2 L27 6 L12 24 Z M240 163 L215 159 L230 141 Z" fill="#000" strokeWidth="3" strokeLinejoin="round" />
    </Svg>
  )],
  ["Browser Win...", 400, (
    <ThumbWindow>
      <ThumbWindowTop>A Web Page
        <Svg w={186} h={18} sw={1.6}>
          <g fill="#fff"><path d="M5 4 L11 -1 V2 H18 V7 H11 V10 Z M34 4 L28 -1 V2 H21 V7 H28 V10 Z M54 -1 L59 5 H57 V10 H51 V5 H49 Z" />
            <rect x="65" y="1" width="86" height="9" /><rect x="158" y="0" width="25" height="10" rx="5" /></g>
          <path d="M39 0 L45 8 M45 0 L39 8" strokeWidth="3" /><circle cx="163" cy="4.5" r="1.6" />
        </Svg>
      </ThumbWindowTop>
      <ThumbWindowBottom />
    </ThumbWindow>
  )],
  ["Button", 352, <ThumbButton>Button</ThumbButton>],
  ["Button Bar", 394, (
    <ThumbBar><ThumbBarCell $w={85} $on>One</ThumbBarCell><ThumbBarCell $w={84}>Two</ThumbBarCell><ThumbBarCell $w={104}>Three</ThumbBarCell></ThumbBar>
  )],
  ["Callout", 254, (
    <Svg w={164} h={164}>
      <path d="M88 2 C128 0 157 20 163 62 C166 110 150 158 96 163 C60 166 12 154 3 104 C-4 50 20 4 88 2Z" fill="#000" stroke="none" />
      <path d="M80 11 C116 10 136 34 138 74 C138 118 118 148 82 151 C46 152 18 128 14 86 C12 42 40 12 80 11Z" fill="#ffff3f" stroke="none" />
      <text x="73" y="101" fontSize="50" fontWeight="500" fill="#000" stroke="none" textAnchor="middle">1</text>
    </Svg>
  )],
  ["Checkbox", 391, <ThumbCheck>Checkbox</ThumbCheck>],
  ["ComboBox", 374, (
    <ThumbCombo><ComboText>ComboBox</ComboText><ComboArrow><Svg w={26} h={16}><path d="M0 0 H26 L13 16 Z" fill="#000" stroke="none" /></Svg></ComboArrow></ThumbCombo>
  )],
  ["Comment", 392, (
    <Note>
      <Svg w={150} h={175}>
        <path d="M5 20 L150 25 L147 175 Q120 174 90 172 Q40 170 0 167 Z" fill="#e8ca55" stroke="none" />
        <path d="M6 22 L100 26 Q60 60 18 92 Z M10 112 Q60 80 70 100 Q50 110 8 122 Z" fill="#ebd36d" stroke="none" />
        <path d="M44 7 L105 0 V30 L46 36 Z" fill="#c0302c" stroke="none" />
        <path d="M44 7 L105 0 V19 H45 Z" fill="#c5534b" stroke="none" />
      </Svg>
      <NoteText>A comment</NoteText>
    </Note>
  )],
  ["Data Grid", 376, <DataGridThumb />],
  ["Field Set", 392, <ThumbFieldset><legend>Group Name</legend></ThumbFieldset>],
  ["H.Rule", 372, <Svg w={283} h={10}><path d="M0 4 Q60 7 140 7 Q220 6 283 14 V19 Q200 13 130 13 Q30 11 0 4Z" fill="#000" stroke="none" /></Svg>],
  ["Icon", 212, <ThumbIcon $s={102} $c="#808080" />],
  ["Icon and Tex...", 362, <ThumbIconText><ThumbIcon $s={127} $c="#111" />Icon Name</ThumbIconText>],
  ["Image", 414, (
    <Svg w={166} h={175}>
      <rect x="3" y="3" width="160" height="169" fill="#fff" stroke="#000" strokeWidth="5.5" />
      <path d="M10 10 L156 165 M156 10 L10 165" stroke="#555" strokeWidth="6" />
    </Svg>
  )],
  ["Link", 198, <ThumbLink>a link</ThumbLink>],
  ["List", 412, <ThumbList>Item One<br />Item Two<br />Item Three</ThumbList>],
];

const segments = [["UI Controls", 306, true], ["Icons", 183.5], ["Images", 224.5], ["Templates", 290]];
const chips = [
  ["Common", 271, true], ["All", 147], ["Android", 243], ["Big", 148], ["Buttons", 243], ["Containers", 304], ["Forms", 208],
  ["iOS", 148], ["Layout", 217], ["Markup", 240], ["Media", 204], ["Text", 160], ["More...", 222],
];

function UiLibrary() {
  return (
    <Library>
      <FilterBar>
        <Segments>{segments.map(([t, w, on]) => <Segment key={t} $w={w} $on={on}>{t}</Segment>)}</Segments>
        <FilterRule />
        <Chips>{chips.map(([t, w, on]) => <Chip key={t} $w={w} $on={on}>{t}</Chip>)}</Chips>
      </FilterBar>
      <Shelf>
        {shelf.map(([label, w, art]) => (
          <ShelfItem key={label} $w={w}><Thumb>{art}</Thumb><ShelfLabel>{label}</ShelfLabel></ShelfItem>
        ))}
      </Shelf>
    </Library>
  );
}

export default function App() {
  return (
    <Shell>
      <Global />
      <TopBar />
      <Body>
        <LeftRail />
        <Main>
          <UiLibrary />
          <Wireframes />
        </Main>
        <RightRail />
      </Body>
    </Shell>
  );
}
